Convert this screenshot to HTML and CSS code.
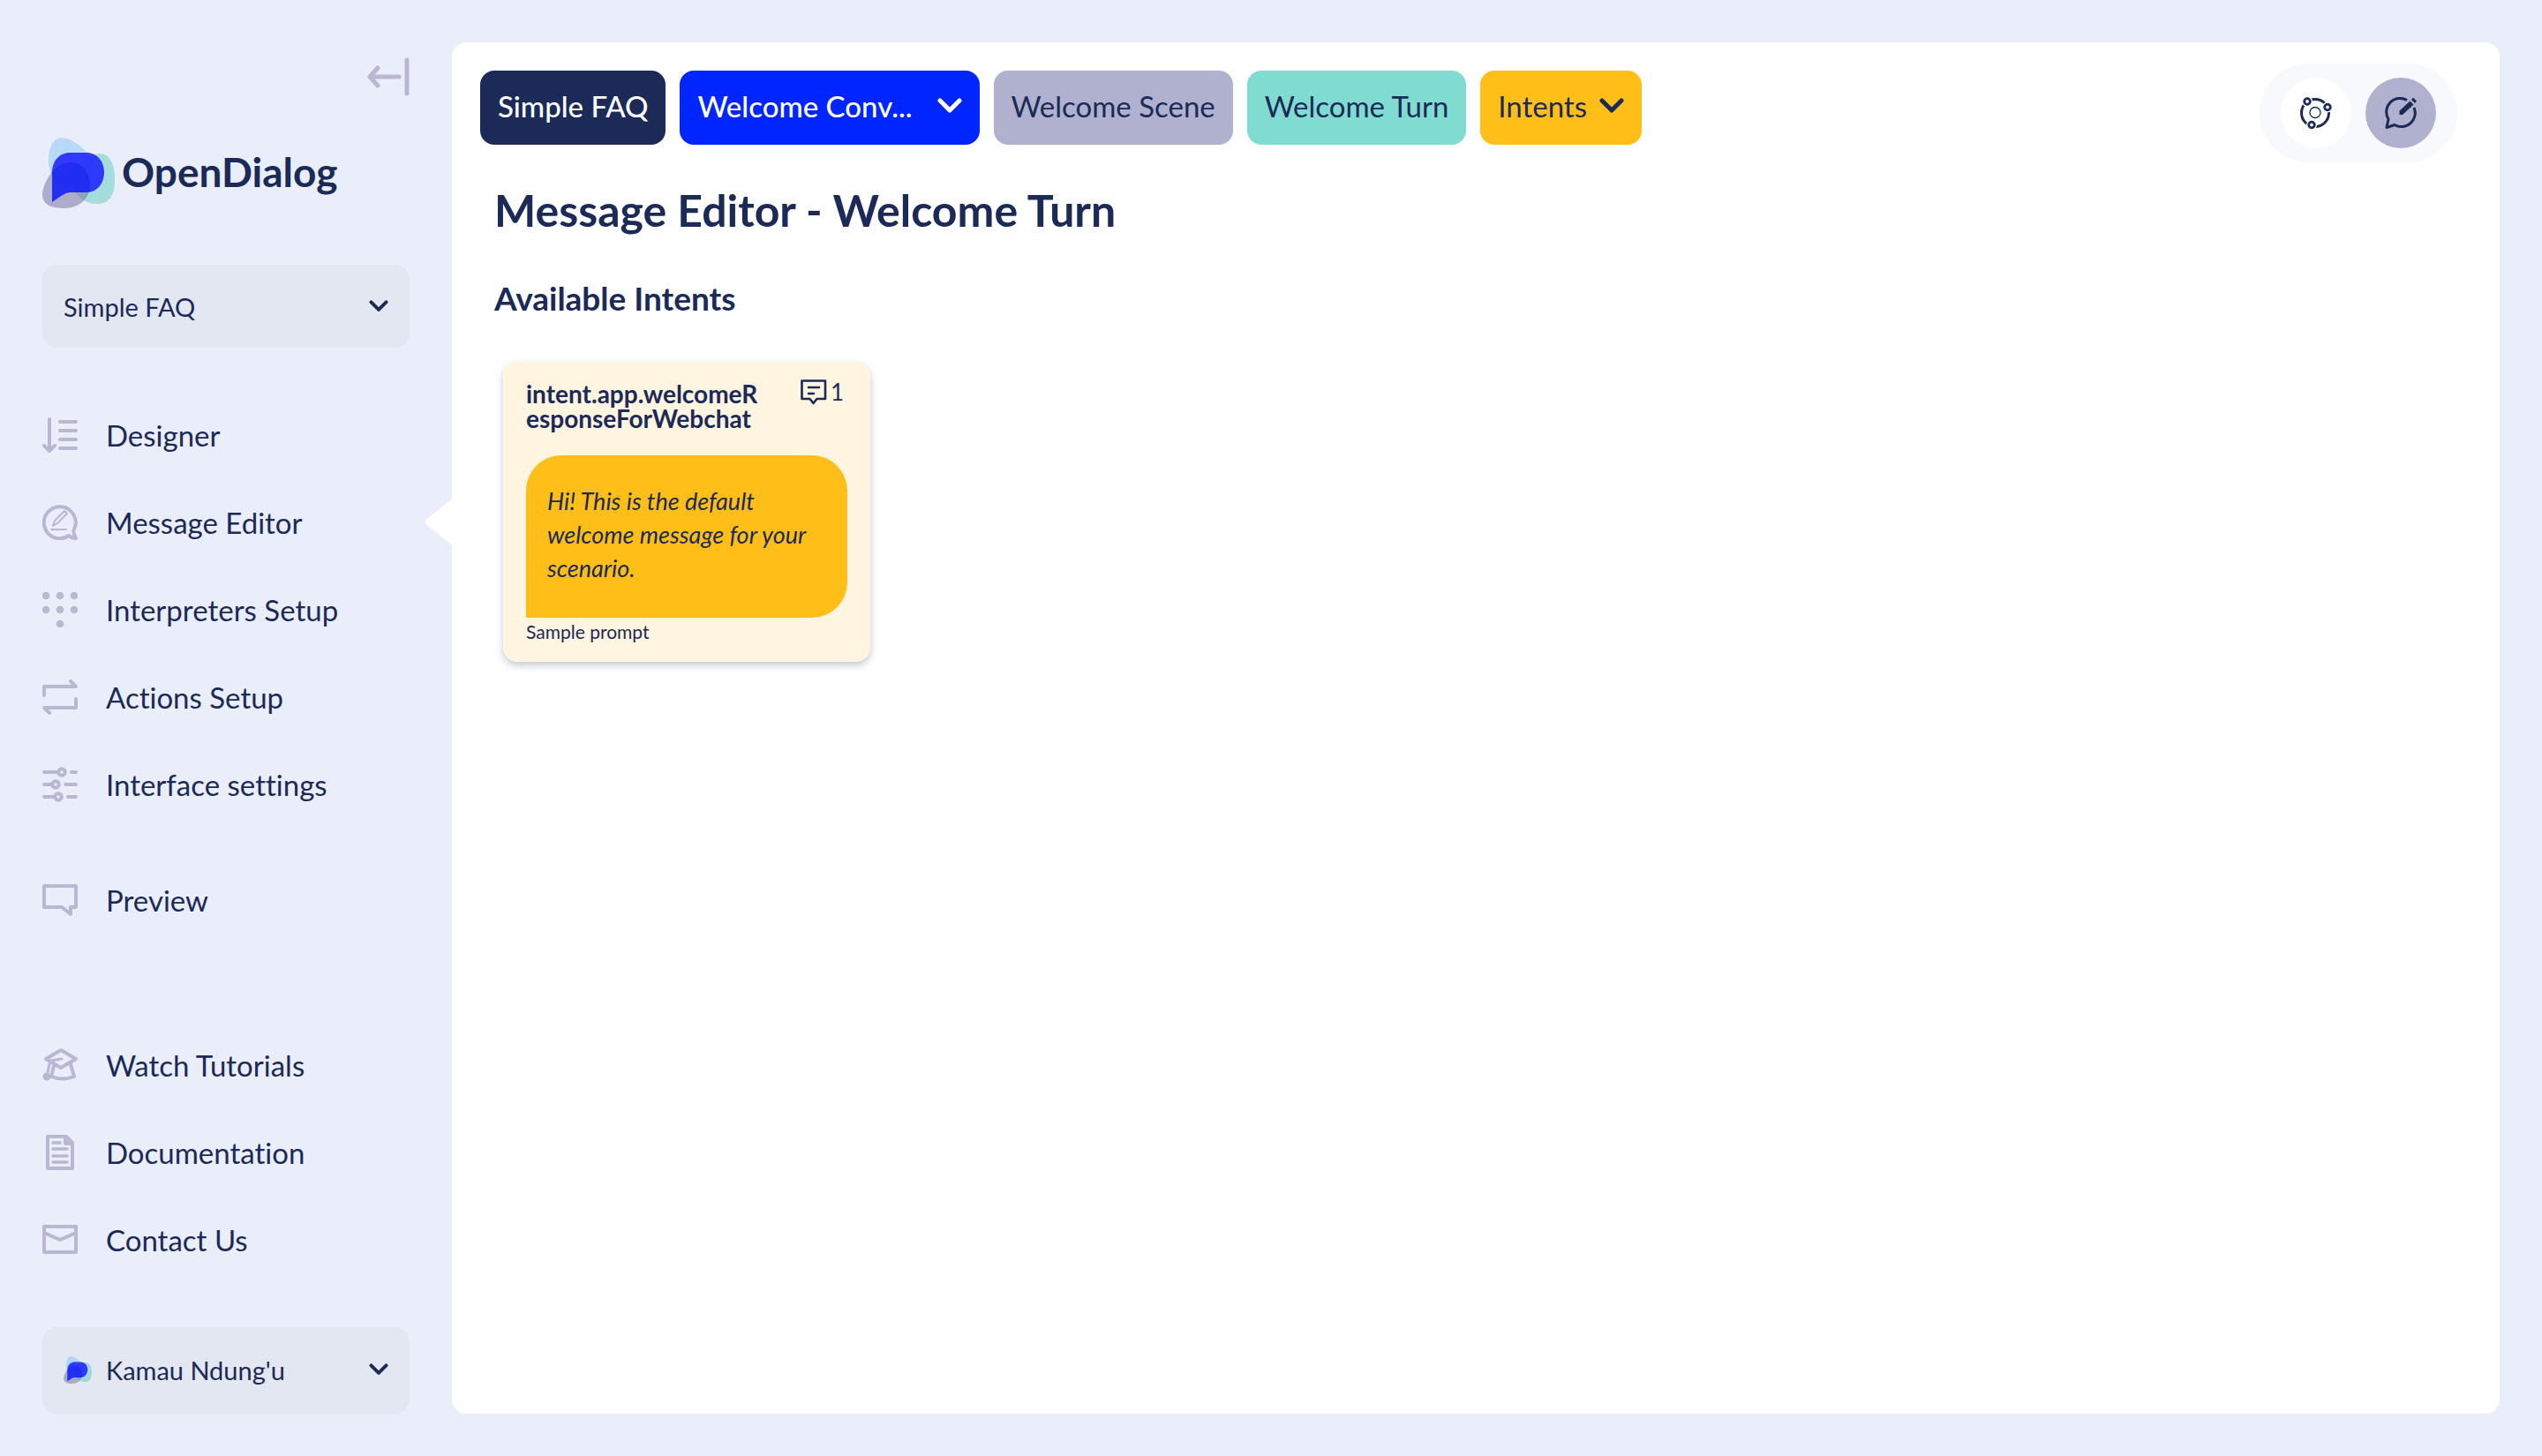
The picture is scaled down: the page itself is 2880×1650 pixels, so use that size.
FILE: index.html
```html
<!DOCTYPE html>
<html lang="en">
<head>
<meta charset="utf-8">
<meta name="viewport" content="width=device-width, initial-scale=1">
<title>Message Editor - OpenDialog</title>
<link rel="stylesheet" href="styles.css">
</head>
<body>
<svg width="0" height="0" class="sprite" aria-hidden="true">
  <symbol id="logo-mark" viewBox="0 0 82 80">
    <path fill="#8ec9f7" opacity=".55" d="M22 0C34 0 59 19 59 34C59 46 46 55 31 55C17 55 7 43 7 26C7 10 13 0 22 0Z"/>
    <path fill="#60c9bd" opacity=".5" d="M65 18C76 18 82 30 82 47C82 64 77 75 62 75C45 75 33 62 33 47C33 33 53 18 65 18Z"/>
    <path fill="#6b6799" opacity=".48" d="M31 28C45 28 54 40 54 53C54 69 42 80 24 80C9 80 0 75 0 65C0 51 14 28 31 28Z"/>
    <path fill="#1a20ff" opacity=".86" d="M31 17H50C62 17 70 27 70 39C70 52 62 62 50 62H32C25 62 22 66 11 73V40C11 26 20 17 31 17Z"/>
    <path fill="#0a28e0" opacity=".3" d="M31 28C45 28 54 40 54 53C54 57 54 59 53 62H32C25 62 22 66 11 73V40C16 32 23 28 31 28Z"/>
  </symbol>
  <symbol id="chevron" viewBox="0 0 28 18"><path d="M3 3L14 14L25 3" fill="none" stroke="currentColor" stroke-width="5" stroke-linecap="round" stroke-linejoin="round"/></symbol>
</svg>
<div class="app">
  <aside class="sidebar">
    <button class="collapse" type="button" aria-label="Collapse sidebar">
      <svg class="line" width="48" height="44" viewBox="0 0 48 44"><path stroke-width="5" d="M45 3V41M36 22H3M12 12L3 22L12 32"/></svg>
    </button>
    <a class="brand" href="#">
      <svg width="82" height="80"><use href="#logo-mark"/></svg>
      <span>OpenDialog</span>
    </a>
    <div class="scenario">
      <select class="scenario-select" aria-label="Scenario"><option>Simple FAQ</option></select>
      <svg class="chevron-small" width="22" height="14"><use href="#chevron"/></svg>
    </div>
    <nav class="nav">
      <ul>
        <li><a href="#"><svg class="line" width="40" height="40" viewBox="0 0 40 40"><path d="M8 2V38M2 32L8 38L14 32M20 5H38M20 15H38M20 25H38M20 35H38"/></svg>Designer</a></li>
        <li><a class="active" href="#" aria-current="page"><svg class="line" width="40" height="40" viewBox="0 0 40 40"><path d="M30 35A18 18 0 1 1 36 28Q34 30 38 38Q33 38 30 35Z"/><path stroke-width="2" d="M10 28H27M12 24L14 18L25 7L28 10L17 21ZM12 24L17 21"/></svg>Message Editor</a></li>
        <li><a href="#"><svg width="40" height="40" viewBox="0 0 40 40" fill="currentColor"><circle cx="4" cy="4" r="4.300"/><circle cx="20" cy="4" r="4.300"/><circle cx="36" cy="4" r="4.300"/><circle cx="4" cy="20" r="4.300"/><circle cx="20" cy="20" r="4.300"/><circle cx="36" cy="20" r="4.300"/><circle cx="20" cy="36" r="4.300"/></svg>Interpreters Setup</a></li>
        <li><a href="#"><svg class="line" width="40" height="40" viewBox="0 0 40 40"><path d="M2 18V8H38L32 2M38 22V32H2L8 38"/></svg>Actions Setup</a></li>
        <li><a href="#"><svg class="line" width="40" height="40" viewBox="0 0 40 40"><path d="M2 6H17M33 6H38M2 20H10M26 20H38M2 34H13M29 34H38"/><circle cx="22" cy="6" r="3.8"/><circle cx="15" cy="20" r="3.8"/><circle cx="18" cy="34" r="3.8"/></svg>Interface settings</a></li>
      </ul>
      <ul>
        <li><a href="#"><svg class="line" width="40" height="36" viewBox="0 0 40 36"><path d="M2 2H38V26H32V34L22 26H2Z"/></svg>Preview</a></li>
      </ul>
      <ul class="help">
        <li><a href="#"><svg class="line" width="40" height="38" viewBox="0 0 40 38"><path d="M21 2L38 12L21 22L4 12Z"/><path d="M13 20L10 32Q23 37 36 32L32 18"/><path d="M22 12L9 14L6 27" stroke-width="3"/><circle cx="5" cy="32" r="4.5" fill="currentColor" stroke="none"/></svg>Watch Tutorials</a></li>
        <li><a href="#"><svg class="line" width="40" height="40" viewBox="0 0 40 40"><path d="M6 2H27L34 9V38H6Z"/><path d="M26 2V10H34Z" fill="currentColor"/><path stroke-width="3.500" d="M12 9H20M12 16H28M12 24H28M12 31H28"/></svg>Documentation</a></li>
        <li><a href="#"><svg class="line" width="40" height="34" viewBox="0 0 40 34"><path d="M2 2H38V31H2ZM2 9L20 17L38 9"/></svg>Contact Us</a></li>
      </ul>
    </nav>
    <button class="account" type="button">
      <svg width="32" height="31"><use href="#logo-mark"/></svg>
      <span>Kamau Ndung'u</span>
      <svg class="chevron-small" width="22" height="14"><use href="#chevron"/></svg>
    </button>
  </aside>
  <main class="panel">
    <header class="topbar">
      <div class="crumbs">
        <button class="crumb crumb-scenario" type="button">Simple FAQ</button>
        <button class="crumb crumb-conversation" type="button">Welcome Conv...<svg width="28" height="18"><use href="#chevron"/></svg></button>
        <button class="crumb crumb-scene" type="button">Welcome Scene</button>
        <button class="crumb crumb-turn" type="button">Welcome Turn</button>
        <button class="crumb crumb-intents" type="button">Intents<svg width="28" height="18"><use href="#chevron"/></svg></button>
      </div>
      <div class="modes">
        <button class="mode" type="button" aria-label="Designer view">
          <svg width="36" height="36" viewBox="0 0 36 36" fill="none" stroke="currentColor"><circle cx="17" cy="18" r="15.5" stroke-width="3"/><circle cx="17" cy="17.5" r="6" stroke-width="1.3"/><g fill="#fff" stroke="none"><circle cx="8" cy="5" r="6"/><circle cx="31" cy="11.5" r="6"/><circle cx="13" cy="31.5" r="6"/></g><g stroke-width="2.8"><circle cx="8" cy="5" r="3.3"/><circle cx="31" cy="11.5" r="3.3"/><circle cx="13" cy="31.5" r="3.3"/></g></svg>
        </button>
        <button class="mode selected" type="button" aria-label="Message view" aria-pressed="true">
          <svg width="36" height="36" viewBox="0 0 36 36" fill="none" stroke="currentColor" stroke-width="3"><path stroke-linejoin="round" d="M25 3.5A15.5 15.5 0 0 0 4 25L2 34.5L11 31.5A15.5 15.5 0 0 0 33 12"/><path fill="currentColor" stroke="none" d="M16.500 20V15.500L28.500 4.500L32.500 8.500L20 20ZM30 3L32 .5L36 4.500L34 7Z"/></svg>
        </button>
      </div>
    </header>
    <h1>Message Editor - Welcome Turn</h1>
    <h2>Available Intents</h2>
    <section class="intents">
      <article class="card">
        <header class="card-head">
          <h3>intent.app.welcomeR<wbr>esponseForWebchat</h3>
          <span class="count"><svg width="30" height="30" viewBox="0 0 30 30" fill="none" stroke="currentColor" stroke-width="2.6"><path stroke-linejoin="round" d="M1.500 1.500H28V22H18.500L14.500 27L10.500 22H1.500Z"/><path stroke-linecap="round" d="M9 9H21M9 16H15"/></svg>1</span>
        </header>
        <p class="bubble">Hi! This is the default welcome message for your scenario.</p>
        <p class="caption">Sample prompt</p>
      </article>
    </section>
  </main>
</div>
</body>
</html>
```
FILE: styles.css
```css
:root {
  --navy: #1b2a56;
  --page: #eaeefa;
  --field: #e3e7f2;
  --lilac: #b0b1ce;
  --icon: #bab7d3;
  --yellow: #ffbe18;
}

* { box-sizing: border-box; }

html, body { height: 100%; }

body {
  margin: 0;
  background: var(--page);
  color: var(--navy);
  font-family: Lato, "Open Sans", sans-serif;
  font-size: 33px;
  font-variant-ligatures: none;
}

button, select { font: inherit; color: inherit; border: 0; cursor: pointer; }
a { color: inherit; text-decoration: none; }
svg { display: block; flex: none; }
h1, h2, h3, p, ul { margin: 0; padding: 0; }
ul { list-style: none; }

.sprite { position: absolute; }
.line { fill: none; stroke: currentColor; stroke-width: 4; stroke-linecap: round; stroke-linejoin: round; }

.app {
  display: flex;
  gap: 48px;
  min-height: 100%;
  padding: 48px;
}

.sidebar {
  display: flex;
  flex-direction: column;
  flex: 0 0 416px;
}

.collapse {
  align-self: flex-end;
  margin-top: 17px;
  padding: 0;
  background: none;
  color: var(--icon);
}

.brand {
  display: flex;
  align-items: center;
  gap: 8px;
  margin: 47px 0 64px;
  font-size: 46px;
  font-weight: 700;
}

.brand span { padding-bottom: 4px; }

.scenario { display: grid; align-items: center; }
.scenario > * { grid-area: 1 / 1; }
.scenario .chevron-small { justify-self: end; margin-right: 24px; pointer-events: none; }

.scenario-select {
  appearance: none;
  width: 100%;
  height: 94px;
  padding: 0 24px;
  border-radius: 16px;
  background: var(--field);
  font-size: 29px;
}

.nav { display: flex; flex-direction: column; gap: 32px; margin-top: 49px; }
.nav .help { margin-top: 56px; }

.nav a {
  position: relative;
  display: flex;
  align-items: center;
  gap: 32px;
  height: 99px;
}

.nav svg { color: var(--icon); }

.nav .active::after {
  content: "";
  position: absolute;
  right: -48px;
  width: 30px;
  height: 52px;
  background: #fff;
  clip-path: polygon(100% 0, 100% 100%, 4% 56%, 0 50%, 4% 44%);
}

.account {
  display: flex;
  align-items: center;
  gap: 16px;
  height: 98px;
  margin-top: auto;
  padding: 0 24px 2px;
  border-radius: 16px;
  background: var(--field);
  font-size: 29px;
}

.account .chevron-small { margin-left: auto; }

.panel {
  flex: 1;
  min-width: 0;
  padding: 24px 48px 48px 32px;
  border-radius: 16px;
  background: #fff;
}

.topbar { display: flex; justify-content: space-between; align-items: flex-start; }
.crumbs { display: flex; gap: 16px; margin-top: 8px; }

.crumb {
  display: flex;
  align-items: center;
  height: 84px;
  padding: 0 20px 4px;
  border-radius: 16px;
}

.crumb-scenario { background: var(--navy); color: #fff; font-weight: 500; }
.crumb-conversation { gap: 28px; background: #0025ff; color: #fff; font-weight: 500; }
.crumb-scene { background: var(--lilac); }
.crumb-turn { background: #80dcd1; }
.crumb-intents { gap: 14px; background: var(--yellow); }

.modes { display: flex; gap: 16px; padding: 16px 24px; border-radius: 56px; background: #f8f9fd; }

.mode {
  display: grid;
  place-items: center;
  width: 80px;
  height: 80px;
  padding: 0;
  border-radius: 50%;
  background: #fff;
}

.mode.selected { background: var(--lilac); }

h1 { margin: 22px 0 0 16px; font-size: 50px; line-height: 64px; font-weight: 700; }
h2 { margin: 44px 0 48px 16px; font-size: 37px; line-height: 48px; font-weight: 700; }

.intents {
  display: grid;
  grid-template-columns: repeat(auto-fill, 416px);
  gap: 32px;
  padding-left: 26px;
}

.card {
  padding: 20px 26px 16px;
  border-radius: 16px;
  background: #fff5e0;
  box-shadow: 0 4px 8px rgba(27, 42, 86, .25);
}

.card-head { display: flex; justify-content: space-between; align-items: flex-start; }
.card h3 { padding-top: 2px; font-size: 28px; line-height: 28px; font-weight: 700; }
.count { display: flex; gap: 4px; margin-right: 4px; font-size: 26px; line-height: 28px; }

.bubble {
  margin-top: 28px;
  padding: 33px 24px 37px;
  border-radius: 40px 40px 40px 0;
  background: var(--yellow);
  font-size: 27px;
  line-height: 38px;
  font-style: italic;
  font-weight: 400;
}

.caption { font-size: 21px; line-height: 32px; padding-bottom: 2px; }
```
